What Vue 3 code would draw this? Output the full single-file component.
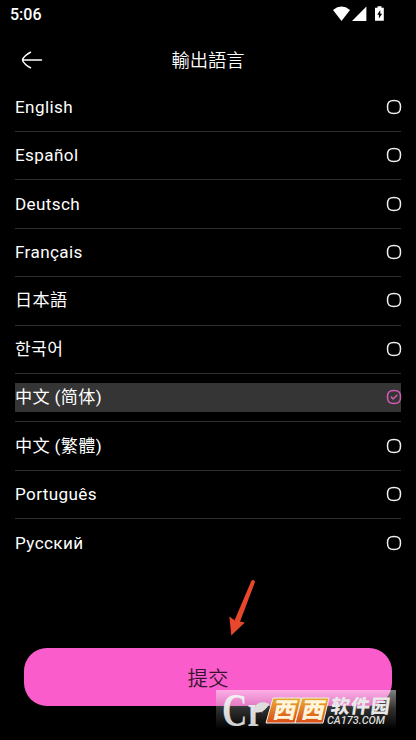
<script setup>
import { ref } from 'vue'

const selected = ref(6)
const languages = ['English', 'Español', 'Deutsch', 'Français', '日本語', '한국어', '中文 (简体)', '中文 (繁體)', 'Português', 'Русский']
</script>

<template>
  <main class="screen">
    <header class="status">
      <span class="clock">5:06</span>
      <svg class="status-icons" width="52" height="16" viewBox="0 0 52 16">
        <path d="M1 4Q9.500-2.800 18 4L9.500 15Z" fill="#fff" />
        <path d="M34.400 .5V15H20Z" fill="#fff" />
        <path d="M45.500 .2h4v1.500h2.300v13h-8.800v-13h2.500Z" fill="#fff" />
        <path d="M48.300 4l-3.100 4.700h1.700v3.800l3.200-4.800h-1.800Z" fill="#000" />
      </svg>
    </header>
    <nav class="titlebar">
      <button class="back" aria-label="返回">
        <svg width="22" height="18" viewBox="0 0 22 18" fill="none" stroke="#fff" stroke-width="1.500" stroke-linecap="round">
          <path d="M1.500 9H20.500M9.500 1.200C6.800 2.500 1.800 6.200 1.500 9C1.800 11.800 6.800 15.500 9.500 16.800" />
        </svg>
      </button>
      <h1>輸出語言</h1>
    </nav>
    <ul class="list">
      <li v-for="(name, i) in languages" :key="name" @click="selected = i">
        <div class="option" :class="{ active: selected === i }">
          <span>{{ name }}</span>
          <svg class="check" width="16" height="16" viewBox="0 0 16 16" fill="none">
            <path d="M8 1.500C12.900 1.500 14.500 3.100 14.500 8S12.900 14.500 8 14.500 1.500 12.900 1.500 8 3.100 1.500 8 1.500Z" />
            <path v-if="selected === i" d="M5.300 8.100L7.200 10L10.900 6.300" />
          </svg>
        </div>
      </li>
    </ul>
    <button class="submit">提交</button>
    <svg class="pointer" width="34" height="60" viewBox="0 0 34 60">
      <path d="M29 1.200Q31.600.5 32 3L16.700 43.500L11.500 41.500L28.200 2.200Z" />
      <path d="M6.300 37.500L12 41.500L21.800 43.500L8.300 56.500Z" />
    </svg>
    <aside class="watermark">
      <svg width="180" height="38" viewBox="0 0 180 38">
        <defs>
          <linearGradient id="silver" x1="0" y1="0" x2="0" y2="1">
            <stop offset="0" stop-color="#fff" />
            <stop offset="1" stop-color="#c4c4c4" />
          </linearGradient>
          <linearGradient id="amber" x1="0" y1="0" x2="0" y2="1">
            <stop offset="0" stop-color="#e9ad30" />
            <stop offset="1" stop-color="#db4c18" />
          </linearGradient>
        </defs>
        <text class="serif" x="6" y="35.500" textLength="41" lengthAdjust="spacingAndGlyphs">Cr</text>
        <path d="M37 22C38 13 46 10 53.500 14C49 21 44 24 37 22Z" fill="#ddd" />
        <path d="M57 8H85L79 33H50ZM86 8H113L107 33H79Z" fill="url(#amber)" stroke="#eee" stroke-width="1" />
        <text class="west" transform="translate(56 28) skewX(-12)" textLength="23" lengthAdjust="spacingAndGlyphs">西</text>
        <text class="west" transform="translate(84.500 28) skewX(-12)" textLength="23" lengthAdjust="spacingAndGlyphs">西</text>
        <text class="brand" transform="translate(114 22.500) skewX(-8)" textLength="59">软件园</text>
        <text class="domain" x="111" y="33.500" textLength="58" lengthAdjust="spacingAndGlyphs">CA173.COM</text>
      </svg>
    </aside>
  </main>
</template>

<style>
body { background: #000; }
</style>

<style scoped>
.screen { position: relative; box-sizing: border-box; width: 416px; height: 740px; overflow: hidden; background: #000; color: #fff; font-family: Roboto, "Noto Sans CJK SC", "Noto Sans CJK KR", sans-serif; }
.status { display: flex; justify-content: space-between; box-sizing: border-box; height: 30px; padding: 6px 32px 0 10px; }
.clock { font-size: 16px; line-height: 18px; font-weight: 500; }
button { border: 0; padding: 0; font-family: inherit; }
.titlebar { display: grid; grid-template-columns: 60px 1fr 60px; align-items: center; height: 60px; }
.back { display: flex; padding-left: 21px; background: none; }
h1 { margin: 0 0 2px; text-align: center; font-family: "Noto Sans CJK TC", sans-serif; font-size: 18.3px; font-weight: 350; line-height: 26px; }
.list { list-style: none; margin: 0; padding: 0 15px; }
li { display: flex; align-items: center; box-sizing: border-box; height: 48.42px; border-bottom: 1px solid #2c2c2c; }
li:first-child { height: 42px; padding-bottom: 7px; }
li:last-child { border: 0; padding-bottom: .6px; }
.option { flex: 1; display: flex; align-items: center; justify-content: space-between; height: 29px; font-size: 17.1px; font-weight: 400; letter-spacing: .38px; line-height: 29px; }
.active { background: #353535; }
.check { margin: -1px -1px 0 0; stroke: #eee; stroke-width: 1.500; stroke-linecap: round; stroke-linejoin: round; }
.active .check { stroke: #d45ab6; }
.submit { display: block; width: 368px; height: 58px; margin: 80.2px 0 0 24px; border-radius: 23px; background: #fa5ccc; color: #35152d; font-size: 20.5px; font-weight: 350; }
.pointer { position: absolute; left: 223px; top: 579px; fill: #e9472b; }
.watermark { position: absolute; left: 216px; top: 690px; width: 180px; height: 38px; background: linear-gradient(rgba(255,255,255,.5), rgba(160,160,160,.3) 50%, rgba(60,60,60,.05)); }
.watermark svg { display: block; overflow: visible; }
.serif { font: bold 47px "Liberation Serif", serif; fill: url(#silver); }
.west { font: 900 22px "Noto Sans CJK SC", sans-serif; fill: #fff4dc; }
.brand { font: 900 19px "Noto Sans CJK SC", sans-serif; fill: #e8e8e8; }
.domain { font: italic 500 11px Roboto, sans-serif; fill: #ddd; }
</style>
